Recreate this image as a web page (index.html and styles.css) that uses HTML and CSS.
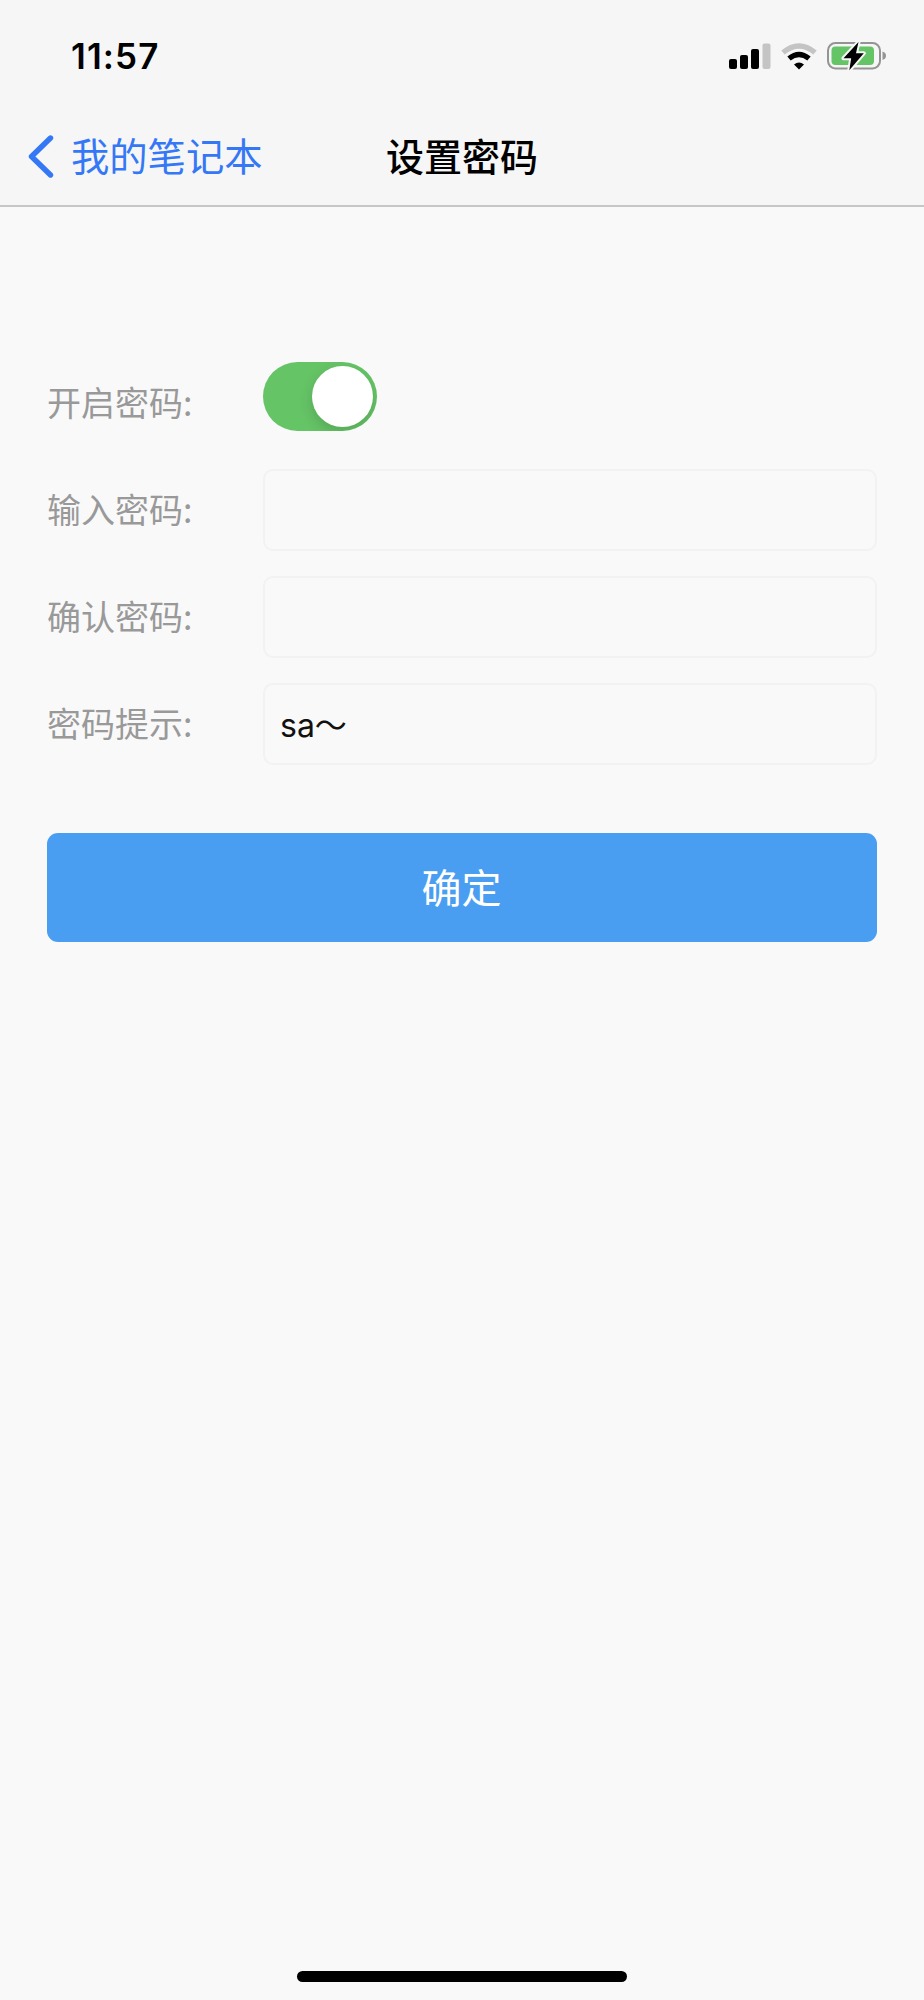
FILE: index.html
```
<!DOCTYPE html>
<html lang="zh-CN">
<head>
    <meta charset="UTF-8">
    <meta name="viewport" content="width=device-width, initial-scale=1.0">
    <title>设置密码</title>
    <link rel="stylesheet" href="styles.css">
</head>
<body>

    <header class="header">
        <div class="status-bar">
            <span class="time">11:57</span>
            <div class="status-icons">
                <svg class="signal" width="42" height="26" viewBox="0 0 42 26">
                    <rect x="0" y="16" width="8" height="10" rx="2"/>
                    <rect x="11" y="12" width="8" height="14" rx="2"/>
                    <rect x="22" y="6" width="8" height="20" rx="2"/>
                    <rect x="33.5" y="0.5" width="8" height="25.5" rx="2" fill="#c4c4c4"/>
                </svg>
                <svg class="wifi" width="36" height="27" viewBox="0 0 36 27">
                    <path d="M2 9.5Q18 -3.5 34 9.5" fill="none" stroke="#c4c4c4" stroke-width="5.4"/>
                    <path d="M8 15.6Q18 7.4 28 15.6" fill="none" stroke="#000" stroke-width="5.2"/>
                    <path d="M13 21.5Q18 17.5 23 21.5L18 26.6Z"/>
                </svg>
                <svg class="battery" width="60" height="30" viewBox="0 0 60 30">
                    <rect x="1" y="2" width="52" height="25.5" rx="7.5" fill="none" stroke="#949494" stroke-width="2"/>
                    <rect x="4.5" y="5.5" width="42.5" height="18.5" rx="4" fill="#65c466"/>
                    <path d="M55.5 10.5Q59 11.5 59 14.8T55.5 19Z" fill="#949494"/>
                    <path d="M31.5 1L16.5 17.2H24.2L22.3 29.3L36.8 12.2H29Z" stroke="#f6f6f6" stroke-width="4" paint-order="stroke" stroke-linejoin="round"/>
                </svg>
            </div>
        </div>
        <nav class="nav-bar">
            <a class="back" href="#">
                <svg width="26" height="44" viewBox="0 0 26 44">
                    <path d="M22.5 3L3.5 21.5L22.5 40" fill="none" stroke="#3478f6" stroke-width="5.4" stroke-linecap="round" stroke-linejoin="round"/>
                </svg>
                <span>我的笔记本</span>
            </a>
            <h1 class="title">设置密码</h1>
        </nav>
    </header>

    <form class="form">
        <div class="row">
            <label for="enable">开启密码:</label>
            <input class="switch" type="checkbox" id="enable" checked>
        </div>
        <div class="row">
            <label for="password">输入密码:</label>
            <input class="field" type="password" id="password">
        </div>
        <div class="row">
            <label for="confirm">确认密码:</label>
            <input class="field" type="password" id="confirm">
        </div>
        <div class="row">
            <label for="hint">密码提示:</label>
            <input class="field" type="text" id="hint" value="sa～">
        </div>
        <button class="submit" type="button">确定</button>
    </form>

    <div class="home-indicator"></div>

</body>
</html>
```
FILE: styles.css
```
* {
    box-sizing: border-box;
}
body {
    margin: 0;
    height: 2000px;
    display: flex;
    flex-direction: column;
    background-color: #f9f9f9;
    font-family: Inter, "Noto Sans CJK SC", sans-serif;
}
.header {
    height: 207px;
    background-color: #f6f6f6;
    border-bottom: 2px solid #c6c6c6;
}
.status-bar {
    height: 112px;
    padding: 0 37px 0 71px;
    display: flex;
    align-items: center;
    justify-content: space-between;
}
.time {
    font-size: 35px;
    font-weight: 600;
    letter-spacing: 1.1px;
}
.status-icons {
    display: flex;
    align-items: center;
    gap: 10px;
}
.nav-bar {
    height: 90px;
    padding: 0 28px;
    display: grid;
    grid-template-columns: 1fr auto 1fr;
    align-items: center;
    font-family: "Noto Sans CJK SC", sans-serif;
    font-size: 38.3px;
    line-height: 56px;
}
.back {
    display: flex;
    align-items: center;
    gap: 17px;
    color: #3478f6;
    font-weight: 400;
    text-decoration: none;
}
.back span {
    padding-bottom: 5px;
}
.title {
    margin: 0;
    padding-bottom: 5px;
    font-size: 38px;
    font-weight: 500;
}
.form {
    flex: 1;
    padding: 155px 47px 0;
    display: flex;
    flex-direction: column;
    gap: 25px;
}
.row {
    height: 82px;
    display: flex;
    align-items: center;
}
label {
    width: 216px;
    padding-bottom: 3px;
    color: #999;
    font-family: "Noto Sans CJK SC", sans-serif;
    font-size: 34px;
    font-weight: 400;
}
.field {
    flex: 1;
    min-width: 0;
    height: 82px;
    padding: 0 15px 2px 15px;
    border: 2px solid #f2f2f2;
    border-radius: 10px;
    background-color: #f9f9f9;
    color: #111;
    font-family: Inter, "Noto Sans CJK SC", sans-serif;
    font-size: 32px;
    font-weight: 400;
    outline: none;
}
.switch {
    appearance: none;
    align-self: flex-start;
    width: 114px;
    height: 69px;
    margin: 0;
    padding: 4px;
    display: flex;
    border-radius: 35px;
    background-color: #65c466;
    overflow: hidden;
}
.switch::before {
    content: "";
    width: 61px;
    height: 61px;
    border-radius: 50%;
    background-color: white;
    box-shadow: 0 5px 14px rgba(0, 0, 0, 0.15);
}
.switch:checked::before {
    margin-left: auto;
}
.submit {
    height: 109px;
    margin-top: 43px;
    padding: 0 1px 4px 0;
    border: none;
    border-radius: 11px;
    background-color: #4a9ef2;
    color: white;
    font-family: "Noto Sans CJK SC", sans-serif;
    font-size: 40px;
    font-weight: 400;
}
.home-indicator {
    width: 330px;
    height: 11px;
    margin: 0 auto 18px;
    border-radius: 6px;
    background-color: black;
}
```
